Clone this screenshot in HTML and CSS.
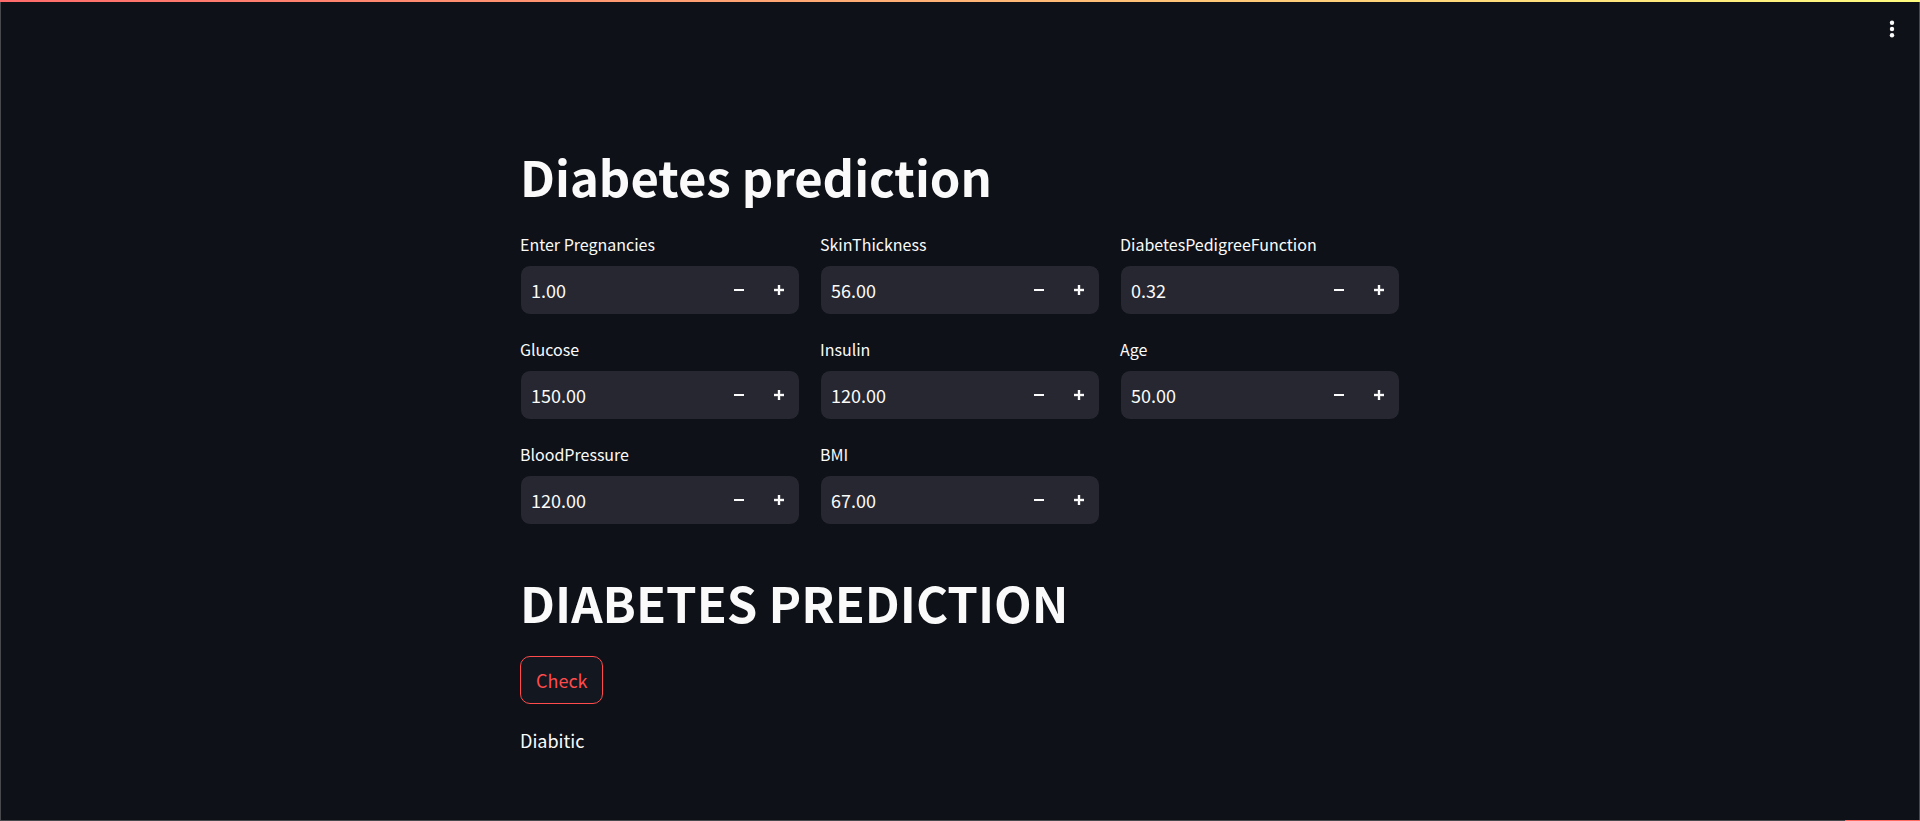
FILE: index.html
```html
<!DOCTYPE html>
<html lang="en">
<head>
<meta charset="utf-8">
<meta name="viewport" content="width=device-width, initial-scale=1">
<title>Diabetes prediction</title>
<link rel="stylesheet" href="styles.css">
</head>
<body>
<svg class="sprite" aria-hidden="true">
  <symbol id="minus" viewBox="0 0 10 10"><path d="M0 4h10v2H0z"/></symbol>
  <symbol id="plus" viewBox="0 0 10 10"><path d="M0 4h4V0h2v4h4v2H6v4H4V6H0z"/><path d="M3.5 0h3v10h-3zM0 3.5h10v3H0z" opacity=".4"/></symbol>
</svg>
<div class="app">
  <header class="toolbar">
    <button class="menu" type="button" aria-label="Main menu">
      <svg class="menu-icon" viewBox="0 0 6 18" aria-hidden="true"><circle cx="3" cy="2.8" r="2.2"/><circle cx="3" cy="9" r="2.2"/><circle cx="3" cy="15.2" r="2.2"/></svg>
    </button>
  </header>
  <main class="content">
    <h1 class="title">Diabetes prediction</h1>
    <div class="columns">
      <div class="column">
        <div class="field">
          <label class="label" for="pregnancies">Enter Pregnancies</label>
          <div class="number"><input class="value" id="pregnancies" type="text" inputmode="decimal" value="1.00"><button class="step" type="button" aria-label="Decrease"><svg class="icon"><use href="#minus"/></svg></button><button class="step" type="button" aria-label="Increase"><svg class="icon"><use href="#plus"/></svg></button></div>
        </div>
        <div class="field">
          <label class="label" for="glucose">Glucose</label>
          <div class="number"><input class="value" id="glucose" type="text" inputmode="decimal" value="150.00"><button class="step" type="button" aria-label="Decrease"><svg class="icon"><use href="#minus"/></svg></button><button class="step" type="button" aria-label="Increase"><svg class="icon"><use href="#plus"/></svg></button></div>
        </div>
        <div class="field">
          <label class="label" for="pressure">BloodPressure</label>
          <div class="number"><input class="value" id="pressure" type="text" inputmode="decimal" value="120.00"><button class="step" type="button" aria-label="Decrease"><svg class="icon"><use href="#minus"/></svg></button><button class="step" type="button" aria-label="Increase"><svg class="icon"><use href="#plus"/></svg></button></div>
        </div>
      </div>
      <div class="column">
        <div class="field">
          <label class="label" for="skin">SkinThickness</label>
          <div class="number"><input class="value" id="skin" type="text" inputmode="decimal" value="56.00"><button class="step" type="button" aria-label="Decrease"><svg class="icon"><use href="#minus"/></svg></button><button class="step" type="button" aria-label="Increase"><svg class="icon"><use href="#plus"/></svg></button></div>
        </div>
        <div class="field">
          <label class="label" for="insulin">Insulin</label>
          <div class="number"><input class="value" id="insulin" type="text" inputmode="decimal" value="120.00"><button class="step" type="button" aria-label="Decrease"><svg class="icon"><use href="#minus"/></svg></button><button class="step" type="button" aria-label="Increase"><svg class="icon"><use href="#plus"/></svg></button></div>
        </div>
        <div class="field">
          <label class="label" for="bmi">BMI</label>
          <div class="number"><input class="value" id="bmi" type="text" inputmode="decimal" value="67.00"><button class="step" type="button" aria-label="Decrease"><svg class="icon"><use href="#minus"/></svg></button><button class="step" type="button" aria-label="Increase"><svg class="icon"><use href="#plus"/></svg></button></div>
        </div>
      </div>
      <div class="column">
        <div class="field">
          <label class="label" for="pedigree">DiabetesPedigreeFunction</label>
          <div class="number"><input class="value" id="pedigree" type="text" inputmode="decimal" value="0.32"><button class="step" type="button" aria-label="Decrease"><svg class="icon"><use href="#minus"/></svg></button><button class="step" type="button" aria-label="Increase"><svg class="icon"><use href="#plus"/></svg></button></div>
        </div>
        <div class="field">
          <label class="label" for="age">Age</label>
          <div class="number"><input class="value" id="age" type="text" inputmode="decimal" value="50.00"><button class="step" type="button" aria-label="Decrease"><svg class="icon"><use href="#minus"/></svg></button><button class="step" type="button" aria-label="Increase"><svg class="icon"><use href="#plus"/></svg></button></div>
        </div>
      </div>
    </div>
    <h1 class="title title-result">DIABETES PREDICTION</h1>
    <button class="check" type="button">Check</button>
    <p class="result">Diabitic</p>
  </main>
  <div class="accent"></div>
</div>
</body>
</html>
```
FILE: styles.css
```css
* {
  box-sizing: border-box;
}

body {
  margin: 0;
  background: #0e1117;
  color: #fafafa;
  font-family: "Noto Sans CJK SC", "Noto Sans", sans-serif;
  font-size: 18px;
  line-height: 32px;
}

button,
input {
  font: inherit;
  color: inherit;
}

.sprite {
  display: none;
}

.app {
  display: flex;
  flex-direction: column;
  min-height: 100vh;
  border: 1px solid #48494d;
  border-top: 0;
}

.toolbar {
  position: absolute;
  inset: 0 0 auto;
  display: flex;
  justify-content: flex-end;
  height: 58px;
  padding: 0 12px;
}

.toolbar::before {
  content: "";
  position: absolute;
  inset: 0 0 auto;
  height: 2px;
  background: linear-gradient(90deg, #ff6b6b, #fffd80);
}

.menu {
  display: grid;
  place-items: center;
  width: 32px;
  padding: 0;
  border: 0;
  background: none;
}

.menu-icon {
  width: 6px;
  height: 18px;
  fill: #fafafa;
}

.content {
  flex: 1;
  width: 100%;
  max-width: 920px;
  margin: 0 auto;
  padding: 120px 20px 40px;
}

.title {
  margin: 0;
  padding: 23px 0 21px;
  font-size: 49px;
  line-height: 66px;
  font-weight: 700;
}

.title-result {
  margin-top: 21px;
}

.columns {
  display: grid;
  grid-template-columns: repeat(3, minmax(0, 1fr));
  gap: 20px;
}

.column {
  display: flex;
  flex-direction: column;
  gap: 20px;
}

.label {
  display: block;
  margin-bottom: 7px;
  font-size: 16px;
  line-height: 28px;
}

.number {
  display: flex;
  height: 50px;
  border: 1px solid #0e1117;
  border-radius: 10px;
  background: #262730;
  overflow: hidden;
}

.value {
  flex: 1;
  min-width: 0;
  padding: 0 10px;
  border: 0;
  outline: 0;
  background: none;
}

.step {
  display: grid;
  place-items: center;
  width: 40px;
  padding: 0;
  border: 0;
  background: none;
}

.icon {
  width: 10px;
  height: 10px;
  fill: #fafafa;
}

.check {
  display: block;
  height: 48px;
  padding: 0 14px 0 15px;
  border: 1px solid #ff4b4b;
  border-radius: 10px;
  background: #131720;
  color: #ff4b4b;
}

.result {
  margin: 20px 0 0;
}

.accent {
  position: absolute;
  right: 0;
  bottom: 0;
  width: 75px;
  height: 1px;
  background: #ff6b63;
}
```
